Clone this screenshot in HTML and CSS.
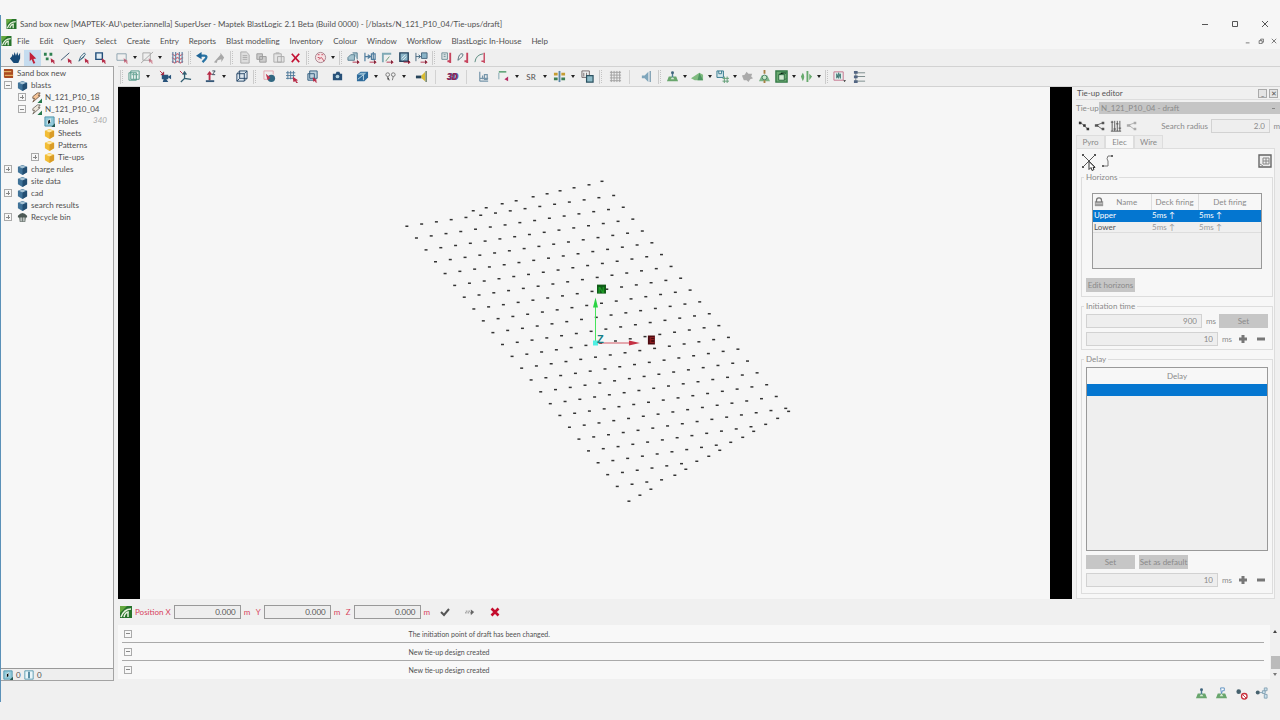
FILE: index.html
```html
<!DOCTYPE html>
<html lang="en">
<head>
<meta charset="utf-8">
<title>Sand box new - Maptek BlastLogic</title>
<link rel="stylesheet" href="styles.css">
</head>
<body>
<svg class="defs" aria-hidden="true">
<symbol id="logo" viewBox="0 0 12 12"><path fill="#27732b" d="M0 0h12v12H0z"/><path fill="#65a83f" d="M0 0h7L0 7z"/><path fill="none" stroke="#e8f2df" stroke-width="1.5" d="M1 11Q4 3 11 3M4 11q1-5 5-5M8 6v5"/></symbol>
<symbol id="hand" viewBox="0 0 14 14"><path fill="#174a78" d="M3 6l1-3 1 2 1-4 1.500 4L9 1l1 4 2-3v6l-2 5H5L1 8z"/></symbol>
<symbol id="arrow" viewBox="0 0 14 14"><path fill="#c22138" d="M4 1l7 7-3 .5L10 13l-2 .7L6 9l-2 2z"/></symbol>
<symbol id="ptr" viewBox="0 0 7 7"><path fill="#b62c48" d="M0 0l6 4-2 .5L6 7H4L3 5 1 6z"/></symbol>
<symbol id="dots" viewBox="0 0 14 14"><path fill="#2e8050" d="M1 2h3v3H1zM7 2h3v3H7zM3 7h3v3H3z"/><use href="#ptr" x="8" y="7" width="6" height="7"/></symbol>
<symbol id="line" viewBox="0 0 14 14"><path stroke="#35506d" d="M1 10L10 2"/><use href="#ptr" x="8" y="7" width="6" height="7"/></symbol>
<symbol id="poly" viewBox="0 0 14 14"><path fill="none" stroke="#35637d" d="M2 11L4 6l4-4 1 2-5 5M2 11l6-5"/><use href="#ptr" x="8" y="7" width="6" height="7"/></symbol>
<symbol id="rect" viewBox="0 0 14 14"><path fill="#e1edf4" stroke="#214e7a" stroke-width="1.500" d="M2 2h7v7H2z"/><use href="#ptr" x="8" y="7" width="6" height="7"/></symbol>
<symbol id="marq" viewBox="0 0 14 14"><path fill="none" stroke="#8aa2ae" d="M1 3h10v7H1z"/><use href="#ptr" x="8" y="7" width="6" height="7" opacity=".6"/></symbol>
<symbol id="cut" viewBox="0 0 14 14"><path fill="none" stroke="#a7a7a7" d="M2 2h8v8H2zM0 13L13 1"/><use href="#ptr" x="8" y="7" width="6" height="7" opacity=".5"/></symbol>
<symbol id="mesh" viewBox="0 0 14 14"><path stroke="#d66e7c" fill="none" stroke-width="1.300" d="M1 3l3 2 3-2 3 2 3-2M1 7l3 2 3-2 3 2 3-2M1 11l3 2 3-2 3 2 3-2"/><path stroke="#6687a8" stroke-width="1.300" d="M2 1v12M5 1v12M9 1v12M12 1v12"/></symbol>
<symbol id="undo" viewBox="0 0 14 14"><path fill="none" stroke="#2873a3" stroke-width="2.400" d="M4 5h5q4 0 1 4l-3 3"/><path fill="#1f6597" d="M0 5l6-4v8z"/></symbol>
<symbol id="redo" viewBox="0 0 14 14"><path fill="#a8a8a8" d="M1 12l7-8V2l4 5-3 5V9l-4 1-1 3z"/></symbol>
<symbol id="file" viewBox="0 0 14 14"><path fill="#ddd" stroke="#aaa" d="M3 1h6l3 3v9H3zM5 5h5M5 7h5M5 9h5"/></symbol>
<symbol id="copy" viewBox="0 0 14 14"><path fill="#ccc" stroke="#999" d="M2 3h6v6H2zM5 6h7v6H5z"/></symbol>
<symbol id="paste" viewBox="0 0 14 14"><path fill="#e5e5e5" stroke="#aaa" d="M2 3h8v9H2zM6 6h7v6H6zM4 2h4"/></symbol>
<symbol id="x" viewBox="0 0 14 14"><path stroke="#c31234" stroke-width="1.800" d="M3 3l8 9M11 3l-8 9"/></symbol>
<symbol id="clock" viewBox="0 0 14 14"><circle cx="7" cy="7" r="5.500" fill="#f6e2e4" stroke="#a6828d"/><path stroke="#c6485d" fill="none" d="M4 4h2M8 4h2M5 9l3-2 3 4M4 7h2"/></symbol>
<symbol id="v1" viewBox="0 0 14 14"><path fill="#a5c4cf" stroke="#577d91" d="M1 7l3-3h4v6H1zM6 2h5v7"/><path stroke="#b2304c" d="M6 12h7M11 10l2 2-2 2"/></symbol>
<symbol id="v2" viewBox="0 0 14 14"><path fill="none" stroke="#507d9e" stroke-width="1.300" d="M1 2v9M1 6h5M4 4l3 2-3 2M8 3h4v6H8zM10 1v9"/><path stroke="#b2304c" d="M6 12h7M11 10l2 2-2 2"/></symbol>
<symbol id="v3" viewBox="0 0 14 14"><path stroke="#7fa9b5" fill="none" stroke-width="2" d="M2 12V3h9"/><path stroke="#6c9a77" d="M5 11l4-5"/><path stroke="#b2304c" d="M6 12h7M11 10l2 2-2 2"/></symbol>
<symbol id="v4" viewBox="0 0 14 14"><path fill="#8ab4c7" stroke="#24435e" stroke-width="1.500" d="M2 2h9v9H2z"/><path stroke="#e5f0f4" d="M4 8l4-4M5 10l4-4"/><path stroke="#b2304c" d="M6 12h7M11 10l2 2-2 2"/></symbol>
<symbol id="v5" viewBox="0 0 14 14"><path fill="#8ab4c7" stroke="#45677e" d="M7 2h6v6H7zM1 2v9M1 6h5M4 4l2 2-2 2"/><path stroke="#b2304c" d="M6 12h7M11 10l2 2-2 2"/></symbol>
<symbol id="b1" viewBox="0 0 14 14"><path fill="#d8e2e4" stroke="#718f97" d="M2 2h6v7H2zM4 4h2M4 6h2"/><path stroke="#c7445e" stroke-width="2" d="M11 2v11M8 11h3"/></symbol>
<symbol id="b2" viewBox="0 0 14 14"><path fill="none" stroke="#53707a" d="M1 10q1-8 5-7 2 2-5 7"/><path stroke="#c7445e" stroke-width="2" d="M11 2v11M8 11h3"/></symbol>
<symbol id="b3" viewBox="0 0 14 14"><path fill="none" stroke="#53867a" d="M1 12q1-8 9-9"/><path stroke="#c7445e" stroke-width="1.500" d="M11 2v11M8 11h3"/></symbol>
<symbol id="layers" viewBox="0 0 14 14"><path fill="#e8f2ee" stroke="#4f9485" d="M1 3h8v8H1zM3 1h9v9H3z"/><path stroke="#6da698" d="M4 5h7M6 3v7M9 3v7"/></symbol>
<symbol id="cam" viewBox="0 0 14 14"><path fill="#28537b" d="M3 5h7v5H3zM10 7l3-2v5l-3-2zM5 10h3l2 3H4z"/><path stroke="#b62c48" d="M1 1l4 4M5 2v3H2"/></symbol>
<symbol id="axes" viewBox="0 0 14 14"><path fill="none" stroke="#315d70" stroke-width="1.400" d="M6 3v6l7 1M6 9l-4 4M4 5l2-3 2 3"/><path stroke="#b62c48" d="M1 1l3 3"/></symbol>
<symbol id="zed" viewBox="0 0 14 14"><path stroke="#b62c48" stroke-width="2" d="M6 4v7"/><path fill="#375878" d="M2 11h9v2H2z"/><path fill="#b62c48" d="M3 5l3-4 3 4z"/><path fill="none" stroke="#345" d="M9 1h3L9 5h3"/></symbol>
<symbol id="cube" viewBox="0 0 14 14"><path fill="#dce6ee" stroke="#274768" d="M2 4h8v8H2zM5 1h8v8H5zM2 4l3-3M10 4l3-3M2 12l3-3M10 12l3-3"/></symbol>
<symbol id="orbit" viewBox="0 0 14 14"><circle cx="9" cy="9" r="4" fill="#326882"/><path fill="none" stroke="#e2a5ae" d="M1 1h10v4M1 1v9h4"/><path fill="#c23450" d="M3 4l5 4-3 3z"/></symbol>
<symbol id="snap" viewBox="0 0 14 14"><path stroke="#4d7898" d="M2 1v9M5 1v9M8 1v9M0 3h10M0 6h10M0 9h8"/><use href="#ptr" x="7" y="7" width="7" height="7"/></symbol>
<symbol id="win" viewBox="0 0 14 14"><path fill="#bdd1dd" stroke="#315c7d" d="M4 1h8v8H4zM2 4h7v7H2z"/><use href="#ptr" x="7" y="7" width="6" height="7"/></symbol>
<symbol id="photo" viewBox="0 0 14 14"><path fill="#275078" d="M2 4h3l1-2h3l1 2h2v7H2z"/><circle cx="7" cy="7" r="2" fill="#b4d2df"/></symbol>
<symbol id="solid" viewBox="0 0 14 14"><path fill="#2e6b9b" d="M1 5l4-3h8v6l-4 4H1z"/><path fill="#93bdd4" d="M2 5l3-2h6L9 5z"/><path stroke="#c4dce6" fill="none" d="M2 10l6-5v6"/></symbol>
<symbol id="pins" viewBox="0 0 14 14"><circle cx="4" cy="5" r="2" fill="#eee" stroke="#777"/><circle cx="10" cy="5" r="2" fill="#eee" stroke="#777"/><path stroke="#777" d="M4 7v3l2 1M10 7l-1 4"/></symbol>
<symbol id="torch" viewBox="0 0 14 14"><path fill="#26445a" d="M1 6h6v3H1z"/><path fill="#d8bb31" d="M7 6l4-4v10L7 9z"/><path stroke="#687a60" stroke-width="1.500" d="M12 1v12"/></symbol>
<symbol id="ruler" viewBox="0 0 14 14"><path fill="none" stroke="#7695aa" stroke-width="1.300" d="M3 2v10M3 9h9M6 6v4M8 5h3v5H8zM3 12h9"/></symbol>
<symbol id="graph" viewBox="0 0 14 14"><path fill="none" stroke="#4b9866" stroke-width="1.500" d="M2 2h8"/><path stroke="#7ba2ae" d="M2 3v7"/><path fill="#b52d65" d="M8 10l4-3v5z"/></symbol>
<symbol id="bars" viewBox="0 0 14 14"><path stroke="#5b87a8" stroke-width="2" d="M7 1v12"/><path fill="#c69d33" d="M1 3h4v3H1zM9 3h4v3H9z"/><path fill="#3e7f55" d="M1 8h4v3H1zM9 8h4v3H9z"/></symbol>
<symbol id="swap" viewBox="0 0 14 14"><path fill="#eee" stroke="#73686a" d="M1 1h8v7H1zM3 3v4M6 3v4"/><path fill="#8fbcc9" stroke="#2b5261" stroke-width="1.300" d="M6 6h7v7H6z"/></symbol>
<symbol id="grid" viewBox="0 0 14 14"><path stroke="#a1a1a1" d="M2.500 1v12M5.500 1v12M8.500 1v12M11.500 1v12M1 2.500h12M1 5.500h12M1 8.500h12M1 11.500h12"/></symbol>
<symbol id="mute" viewBox="0 0 14 14"><path fill="#7fa6bc" d="M2 6h3l4-4v11L5 9H2z"/><path stroke="#7095ab" stroke-width="1.300" d="M11 1v12"/></symbol>
<symbol id="hill" viewBox="0 0 14 14"><path fill="#69a66d" d="M1 12l2-5h8l2 5z"/><path fill="#d6ead4" d="M5 10l2-3 2 3z"/><path stroke="#4f7f96" stroke-width="1.500" d="M7 3v5"/><circle cx="7" cy="3" r="1.600" fill="#3f647c"/></symbol>
<symbol id="slope" viewBox="0 0 14 14"><path fill="#80bb80" d="M0 9l9-6 4 2v6H4z"/><path fill="#4e9762" d="M9 3l4 8H7z"/></symbol>
<symbol id="savegrid" viewBox="0 0 14 14"><path fill="#d3e7eb" stroke="#33788e" d="M1 1h7v7H1zM3 1v3h3V1"/><path stroke="#5f9c72" d="M7 9h7M7 12h7M9 7v7M12 7v7"/></symbol>
<symbol id="blob" viewBox="0 0 14 14"><path fill="#aaa" d="M1 6l3-1 2-3 2 2 4 0-1 3 2 2-3 1-2 3-2-2-3 0z"/></symbol>
<symbol id="peak" viewBox="0 0 14 14"><path fill="#7bb486" d="M1 12l3-6h6l3 6z"/><circle cx="7" cy="8" r="2.500" fill="#c9e8cb" stroke="#478165"/><path fill="#a98144" d="M6 0h2v4H6zM6 11h2v3H6z"/></symbol>
<symbol id="box" viewBox="0 0 14 14"><path fill="#6aaa70" stroke="#367b48" stroke-width="1.500" d="M1 1h12v12H1z"/><path fill="#d2ead2" stroke="#2c6b43" d="M4 5h6v6H4z"/><path stroke="#2c6b43" d="M4 5l3-2h5M10 5l2-2M10 11l2-2"/></symbol>
<symbol id="fan" viewBox="0 0 14 14"><path fill="#67aa6d" d="M3 3q3 4 0 9l-2-5zM7 1h2v12H7zM10 4l3 3-3 4z"/></symbol>
<symbol id="filter" viewBox="0 0 14 14"><path fill="#e4f0ee" stroke="#c8728c" d="M1 2h10v9H1z"/><path stroke="#4b8682" d="M4 9V4l2 5V3l2 6V4"/><path fill="#222" d="M11 11h3l-1.500 2z"/></symbol>
<symbol id="tree" viewBox="0 0 14 14"><path stroke="#788" fill="none" d="M4 3h9M4 7h9M4 12h9M3 1v12"/><path fill="#536683" d="M1 1h4v3H1zM1 6h4v3H1zM1 11h4v3H1z"/></symbol>
<symbol id="db" viewBox="0 0 12 12"><path fill="#ab4b22" d="M1 1h9l1 1v9H2L1 10z"/><path stroke="#f2ce78" d="M1 4h8M2 8h9"/></symbol>
<symbol id="bluecube" viewBox="0 0 12 12"><path fill="#3f7298" d="M1 3l5-2 5 2v6l-5 3-5-3z"/><path fill="#a8c4d5" d="M2 3l4-1.500L10 3 6 5z"/><path fill="#234e72" d="M6 5l5-2v6l-5 3z"/></symbol>
<symbol id="goldcube" viewBox="0 0 12 12"><path fill="#f2bd35" d="M1 3l5-2 5 2v6l-5 3-5-3z"/><path fill="#ffe8a5" d="M2 3l4-1.500L10 3 6 5z"/><path fill="#d99c28" d="M6 5l5-2v6l-5 3z"/></symbol>
<symbol id="blast" viewBox="0 0 12 12"><path fill="#f5c397" stroke="#755f4c" d="M2 5l5-4h3L8 4h2l-8 7 2-4H2z"/><path fill="#26774b" d="M12 7v5H7z"/></symbol>
<symbol id="blast2" viewBox="0 0 12 12"><path fill="#eee6d9" stroke="#776e66" d="M2 5l5-4h3L8 4h2l-8 7 2-4H2z"/><path fill="#26774b" d="M12 7v5H7z"/></symbol>
<symbol id="holes" viewBox="0 0 12 12"><path fill="#92cada" stroke="#4b91a9" d="M1 1h10v10H1z"/><path stroke="#e9fafd" d="M4 9V5l3-2v4"/><path fill="#245a54" d="M12 8v4H8z"/></symbol>
<symbol id="bin" viewBox="0 0 12 12"><path fill="#78817d" d="M2 5h8l-1 6H3z"/><path fill="#4c5955" d="M1 4q5-6 10 0v2H1z"/><path fill="#e6edea" d="M4 6h1v4H4zM7 6h1v4H7z"/></symbol>
<symbol id="chain" viewBox="0 0 14 14"><path stroke="#555" d="M2 2l10 9"/><path fill="#333" d="M1 2h3v3H1zM6 5h3v3H6zM10 9h3v3h-3z"/></symbol>
<symbol id="share" viewBox="0 0 14 14"><path stroke="currentColor" fill="none" d="M3 6l8-3M3 6l7 5"/><path fill="currentColor" d="M1 5h4v3H1zM9 2h3v3H9zM9 9h3v3H9z"/></symbol>
<symbol id="sliders" viewBox="0 0 14 14"><path stroke="#4a4a4a" d="M2.500 1v12M5.500 1v12M8.500 1v12M11.500 1v12M1 2.500h3M4 10.500h3M7 4.500h3M10 9.500h3M1 13h12"/></symbol>
<symbol id="cross" viewBox="0 0 14 14"><path stroke="#555" d="M1 1l12 12M13 1L1 13"/><path fill="#555" d="M0 0h2v2H0zM12 0h2v2h-2zM0 12h2v2H0z"/></symbol>
<symbol id="zig" viewBox="0 0 14 14"><path fill="none" stroke="#777" d="M11 2H7q-2 3 0 5v5H2"/><path fill="#666" d="M10 1h2v2h-2zM1 11h2v2H1z"/></symbol>
<symbol id="table" viewBox="0 0 14 14"><path fill="#eee" stroke="#666" stroke-width="1.400" d="M1 1h12v12H1z"/><path stroke="#888" fill="none" d="M5 4h6v6H5zM5 7h6M8 4v6M2 10l3 2"/></symbol>
<symbol id="lock" viewBox="0 0 12 12"><path fill="#999" d="M1 5h10v6H1z"/><path fill="none" stroke="#777" stroke-width="1.500" d="M3 6V4q0-3 3-3t3 3v2"/><path stroke="#ccc" d="M2 8h8"/></symbol>
<symbol id="plus" viewBox="0 0 10 10"><path fill="#777" d="M3.500 1h3v2.500H9v3H6.500V9h-3V6.500H1v-3h2.500z"/></symbol>
<symbol id="minus" viewBox="0 0 10 10"><path fill="#777" d="M1 3.500h8v3H1z"/></symbol>
<symbol id="tick" viewBox="0 0 10 10"><path fill="none" stroke="#555" stroke-width="2" d="M1 5l3 3 5-6"/></symbol>
<symbol id="skip" viewBox="0 0 12 10"><path stroke="#777" stroke-dasharray="2 1" d="M0 6h8M1 4h6"/><path fill="#666" d="M7 2l4 3-4 4z"/></symbol>
<symbol id="no" viewBox="0 0 10 10"><path stroke="#c40c2d" stroke-width="2.600" d="M1.500 1.500l7 7M8.500 1.500l-7 7"/></symbol>
<symbol id="stop" viewBox="0 0 14 14"><circle cx="4" cy="5" r="2.500" fill="#46616d"/><circle cx="10" cy="10" r="3" fill="#fff" stroke="#c8303c" stroke-width="1.400"/><path stroke="#c8303c" d="M8 8l4 4"/></symbol>
<symbol id="net" viewBox="0 0 14 14"><circle cx="3" cy="6" r="2.200" fill="#46616d"/><path stroke="#86a3b4" fill="#c9dfeb" d="M8 4h3v3H8zM10 1h3v3h-3zM10 8h3v4h-3zM5 6h3"/></symbol>
<symbol id="hill2" viewBox="0 0 14 14"><path fill="#69a66d" d="M1 12l2-5h8l2 5z"/><path fill="#d6ead4" d="M5 10l2-3 2 3z"/><path fill="#fff" stroke="#5a8fc0" d="M6 1h4v3H8L7 7z"/></symbol>
<symbol id="hole1" viewBox="0 0 12 12"><path fill="#e9f6fa" stroke="#4b91a9" d="M1 1h10v10H1z"/><path stroke="#3a7a94" stroke-width="2" d="M6 2v8"/></symbol>
</svg>

<div class="window">
<header class="title">
  <svg class="logo"><use href="#logo"/></svg>
  <h1>Sand box new [MAPTEK-AU\peter.iannella] SuperUser - Maptek BlastLogic 2.1 Beta (Build 0000) - [/blasts/N_121_P10_04/Tie-ups/draft]</h1>
  <div class="winbtns">
    <button aria-label="Minimise"><svg viewBox="0 0 8 8"><path d="M1 4.500h6"/></svg></button>
    <button aria-label="Maximise"><svg viewBox="0 0 8 8"><path d="M1.500 1.500h5v5h-5z"/></svg></button>
    <button aria-label="Close"><svg viewBox="0 0 8 8"><path d="M1 1l6 6M7 1L1 7"/></svg></button>
  </div>
</header>
<nav class="menu">
  <svg class="logo"><use href="#logo"/></svg>
  <button>File</button><button>Edit</button><button>Query</button><button>Select</button><button>Create</button><button>Entry</button><button>Reports</button><button>Blast modelling</button><button>Inventory</button><button>Colour</button><button>Window</button><button>Workflow</button><button>BlastLogic In-House</button><button>Help</button>
  <div class="winbtns small">
    <button aria-label="Minimise view"><svg viewBox="0 0 8 8"><path d="M1 6.500h5"/></svg></button>
    <button aria-label="Restore view"><svg viewBox="0 0 8 8"><path d="M1.500 3.500h4v4h-4zM3.500 3v-1.500h4v4h-2"/></svg></button>
    <button aria-label="Close view"><svg viewBox="0 0 8 8"><path d="M1 1l6 6M7 1L1 7"/></svg></button>
  </div>
</nav>
<div class="bar main-tools" role="toolbar" aria-label="Edit tools">
  <button><svg><use href="#hand"/></svg></button><button class="on"><svg><use href="#arrow"/></svg></button><button><svg><use href="#dots"/></svg></button><button><svg><use href="#line"/></svg></button><button><svg><use href="#poly"/></svg></button><button><svg><use href="#rect"/></svg></button><i class="gap"></i>
  <button><svg><use href="#marq"/></svg></button><button class="more"></button><button><svg><use href="#cut"/></svg></button><button class="more"></button><i class="gap"></i><button><svg><use href="#mesh"/></svg></button><i class="sep"></i>
  <button><svg><use href="#undo"/></svg></button><button><svg><use href="#redo"/></svg></button><i class="sep"></i>
  <button><svg><use href="#file"/></svg></button><button><svg><use href="#copy"/></svg></button><button><svg><use href="#paste"/></svg></button><button><svg><use href="#x"/></svg></button><i class="sep"></i>
  <button><svg><use href="#clock"/></svg></button><button class="more"></button><i class="sep"></i>
  <button><svg><use href="#v1"/></svg></button><button><svg><use href="#v2"/></svg></button><button><svg><use href="#v3"/></svg></button><button><svg><use href="#v4"/></svg></button><button><svg><use href="#v5"/></svg></button><i class="sep"></i>
  <button><svg><use href="#b1"/></svg></button><button><svg><use href="#b2"/></svg></button><button><svg><use href="#b3"/></svg></button>
</div>
<div class="body">
  <aside class="explorer">
    <ul class="tree">
      <li class="root"><svg><use href="#db"/></svg>Sand box new</li>
      <li><button class="tog minus"></button><svg><use href="#bluecube"/></svg>blasts</li>
      <li class="l2"><button class="tog"></button><svg><use href="#blast"/></svg>N_121_P10_18</li>
      <li class="l2"><button class="tog minus"></button><svg><use href="#blast2"/></svg>N_121_P10_04</li>
      <li class="l3"><i></i><svg><use href="#holes"/></svg>Holes<em>340</em></li>
      <li class="l3"><i></i><svg><use href="#goldcube"/></svg>Sheets</li>
      <li class="l3"><i></i><svg><use href="#goldcube"/></svg>Patterns</li>
      <li class="l3"><button class="tog"></button><svg><use href="#goldcube"/></svg>Tie-ups</li>
      <li><button class="tog"></button><svg><use href="#bluecube"/></svg>charge rules</li>
      <li><i></i><svg><use href="#bluecube"/></svg>site data</li>
      <li><button class="tog"></button><svg><use href="#bluecube"/></svg>cad</li>
      <li><i></i><svg><use href="#bluecube"/></svg>search results</li>
      <li><button class="tog"></button><svg><use href="#bin"/></svg>Recycle bin</li>
    </ul>
    <div class="counts"><svg><use href="#holes"/></svg><span>0</span><svg><use href="#hole1"/></svg><span>0</span></div>
  </aside>
  <main class="work">
    <div class="bar view-tools" role="toolbar" aria-label="View tools">
      <div class="roomy"><i class="sep"></i>
      <button><svg><use href="#layers"/></svg></button><button class="more"></button><i class="gap s"></i><button><svg><use href="#cam"/></svg></button><button><svg><use href="#axes"/></svg></button><i class="gap"></i><button><svg><use href="#zed"/></svg></button><button class="more"></button><i class="gap s"></i><button><svg><use href="#cube"/></svg></button><i class="sep"></i>
      <button><svg><use href="#orbit"/></svg></button><i class="gap s"></i><button><svg><use href="#snap"/></svg></button><button><svg><use href="#win"/></svg></button><i class="sep n"></i><button><svg><use href="#photo"/></svg></button><i class="sep n"></i>
      <button><svg><use href="#solid"/></svg></button><button class="more"></button><button><svg><use href="#pins"/></svg></button><button class="more"></button><i class="gap s"></i><button><svg><use href="#torch"/></svg></button><i class="sep w"></i><button class="threed">3D</button><i class="sep w"></i>
      <button><svg><use href="#ruler"/></svg></button><button><svg><use href="#graph"/></svg></button><button class="more"></button><button class="sr">SR</button><button class="more"></button><button><svg><use href="#bars"/></svg></button><button class="more"></button><button><svg><use href="#swap"/></svg></button><i class="sep"></i><button><svg><use href="#grid"/></svg></button><i class="sep w"></i><button><svg><use href="#mute"/></svg></button></div>
      <i class="sep"></i>
      <button><svg><use href="#hill"/></svg></button><button class="more"></button><button><svg><use href="#slope"/></svg></button><button class="more"></button><button><svg><use href="#savegrid"/></svg></button><button class="more"></button><button><svg><use href="#blob"/></svg></button><button><svg><use href="#peak"/></svg></button><button><svg><use href="#box"/></svg></button><button class="more"></button><button><svg><use href="#fan"/></svg></button><button class="more"></button><i class="sep"></i><button><svg><use href="#filter"/></svg></button><i class="gap s"></i><button><svg><use href="#tree"/></svg></button>
    </div>
    <div class="mid">
      <section class="view" aria-label="Blast plan">
        <svg class="plan" viewBox="140 87 910 513">
          <g id="holesLayer"></g>
          <path stroke="#43e45a" d="M595.500 343V305"/><path fill="#2bd444" d="M593 308l2.500-10 2.500 10z"/>
          <path stroke="#d55a66" d="M597 343.500h34"/><path fill="#c43143" d="M629 341l11 2.500-11 2.500z"/>
          <path fill="#4ff0e4" d="M593 341h5v5h-5z"/>
          <path fill="#105d18" d="M597 285h9v9h-9z"/><path fill="#4d0b0f" d="M648 336h7v9h-7z"/>
          <text x="598" y="293" fill="#1fa028">N</text><text x="649" y="344" fill="#8c1c20">E</text>
          <text x="597" y="344" class="z">Z</text>
        </svg>
      </section>
      <aside class="editor">
        <header><h2>Tie-up editor</h2><button class="pb" aria-label="Collapse">_</button><button class="pb" aria-label="Close">✕</button></header>
        <div class="combo"><label for="tie">Tie-up</label><select id="tie"><option>N_121_P10_04 - draft</option></select></div>
        <div class="search"><button><svg><use href="#chain"/></svg></button><button><svg><use href="#share"/></svg></button><button><svg><use href="#sliders"/></svg></button><button class="dim"><svg><use href="#share"/></svg></button>
          <label for="rad">Search radius</label><input id="rad" value="2.0"><span>m</span></div>
        <div class="tabs" role="tablist"><button role="tab">Pyro</button><button role="tab" aria-selected="true">Elec</button><button role="tab">Wire</button></div>
        <div class="panel">
          <div class="ptools"><button><svg><use href="#cross"/></svg><svg class="cursor" viewBox="0 0 8 11"><path fill="#fff" stroke="#333" d="M1 1v8l2-2 1 3 2-1-1-2h2z"/></svg></button><button><svg><use href="#zig"/></svg></button><button class="end"><svg><use href="#table"/></svg></button></div>
          <fieldset class="horizons"><legend>Horizons</legend>
            <div class="tbox"><table><thead><tr><th class="name"><svg><use href="#lock"/></svg>Name</th><th class="deck">Deck firing</th><th>Det firing</th></tr></thead>
            <tbody><tr class="sel"><td>Upper</td><td>5ms ↑</td><td>5ms ↑</td></tr><tr><td>Lower</td><td class="off">5ms ↑</td><td class="off">5ms ↑</td></tr></tbody></table></div>
            <button class="btn">Edit horizons</button>
          </fieldset>
          <fieldset><legend>Initiation time</legend>
            <div class="line"><input aria-label="Initiation time" value="900"><span>ms</span><button class="btn">Set</button></div>
            <div class="line"><input aria-label="Initiation step" value="10"><span class="u">ms</span><button class="pm" aria-label="Increase"><svg><use href="#plus"/></svg></button><button class="pm" aria-label="Decrease"><svg><use href="#minus"/></svg></button></div>
          </fieldset>
          <fieldset class="delay"><legend>Delay</legend>
            <div class="tbox"><table><thead><tr><th>Delay</th></tr></thead><tbody><tr class="sel"><td></td></tr></tbody></table></div>
            <div class="line"><button class="btn">Set</button><button class="btn">Set as default</button></div>
            <div class="line"><input aria-label="Delay step" value="10"><span class="u">ms</span><button class="pm" aria-label="Increase"><svg><use href="#plus"/></svg></button><button class="pm" aria-label="Decrease"><svg><use href="#minus"/></svg></button></div>
          </fieldset>
        </div>
      </aside>
    </div>
    <form class="position"><svg class="logo"><use href="#logo"/></svg><label for="px">Position X</label><input id="px" value="0.000"><span>m</span><label for="py">Y</label><input id="py" value="0.000"><span>m</span><label for="pz">Z</label><input id="pz" value="0.000"><span>m</span>
      <button type="button" aria-label="Accept"><svg><use href="#tick"/></svg></button><button type="button" aria-label="Next"><svg><use href="#skip"/></svg></button><button type="button" aria-label="Cancel"><svg><use href="#no"/></svg></button></form>
    <div class="log"><ul><li><button class="tog minus"></button><span>The initiation point of draft has been changed.</span></li><li><button class="tog minus"></button><span>New tie-up design created</span></li><li><button class="tog minus"></button><span>New tie-up design created</span></li></ul><div class="scroll"><b></b><i></i><b class="dn"></b></div></div>
  </main>
</div>
<footer class="status"><svg><use href="#hill"/></svg><svg><use href="#hill2"/></svg><svg><use href="#stop"/></svg><svg><use href="#net"/></svg></footer>
</div>
<script src="plan.js"></script>
</body>
</html>
```
FILE: styles.css
```css
* { box-sizing: border-box; }
html, body { height: 100%; }
body { margin: 0; padding: 15px 0 18px; background: #f0f0f0; background-image: linear-gradient(#f6f6f6 49px, transparent 49px); color: #505050; font: 8px/12px Lato, "Noto Sans", sans-serif; }
button, input, select { font: inherit; color: inherit; margin: 0; padding: 0; border: 0; background: none; border-radius: 0; }
ul { list-style: none; margin: 0; padding: 0; }
h1, h2 { margin: 0; font: inherit; }
svg { display: block; flex: none; }
.defs { position: absolute; width: 0; height: 0; }
.logo { width: 11px; height: 10px; }
.window { height: 100%; display: flex; flex-direction: column; border-left: 1px solid #5b91b8; }
.title { display: flex; align-items: center; height: 18px; padding-left: 5px; gap: 3px; }
.title h1 { flex: 1; font-size: 8px; white-space: nowrap; }
.winbtns { display: flex; margin-left: auto; }
.winbtns button { width: 30px; display: grid; place-items: center; }
.winbtns svg { width: 8px; height: 8px; fill: none; stroke: #555; }
.winbtns.small button { width: 13px; }
.winbtns.small svg { width: 6px; height: 6px; }
.menu { display: flex; align-items: center; height: 16px; }
.menu > button { padding: 0 5px; white-space: nowrap; }

.bar { display: flex; align-items: center; background: #efefef; }
.bar button { width: 17px; height: 16px; flex: none; display: grid; place-items: center; }
.bar svg { width: 13px; height: 13px; }
.bar .on { background: #c5dcef; }
.bar .more { width: 8px; }
.bar .more::after { content: ""; border: 2px solid transparent; border-top: 3px solid #222; border-bottom: 0; }
.gap { width: 5px; flex: none; }
.gap.s { width: 3px; }
.sep { width: 8px; height: 14px; flex: none; background: linear-gradient(#ccc, #ccc) 2px 0 / 1px 100% no-repeat, repeating-linear-gradient(#c4c4c4 0 1px, transparent 1px 2px) 4px 0 / 1px 100% no-repeat; }
.sep.n { width: 5px; background: none; }
.sep.w { width: 11px; background: linear-gradient(#d2d2d2, #d2d2d2) 4px 0 / 1px 100% no-repeat; }
.main-tools { height: 17px; padding-left: 6px; }
.view-tools { height: 21px; border: 1px solid #d2d2d2; border-width: 1px 0; }
.roomy { display: flex; align-items: center; }
.roomy button { width: 20px; }
.roomy > .sep:first-child { width: 6px; }
.bar .threed { color: #8b2356; font: italic 900 9px Roboto, sans-serif; text-shadow: 1px 0 #4661a2; }

.body { flex: 1; min-height: 0; display: flex; gap: 4px; }
.explorer { width: 113px; flex: none; display: flex; flex-direction: column; margin-bottom: 3px; border: 1px solid #a3a3a3; border-left: 0; background: #f7f7f7; }
.tree { flex: 1; }
.tree li { display: flex; align-items: center; height: 12px; padding-left: 3px; white-space: nowrap; }
.tree li > svg { width: 11px; height: 11px; margin: 0 3px 0 5px; }
.tree .root { padding-left: 2px; }
.tree .root > svg { margin-left: 0; }
.tree .l2 { padding-left: 17px; }
.tree .l3 { padding-left: 30px; }
.tree li > i { width: 8px; }
.tree em { margin: 0 6px 2px auto; color: #aaa; }
.tog { width: 8px; height: 8px; flex: none; }
.tree .tog, .log .tog { border: 1px solid #aaa; background: linear-gradient(#888, #888) 1px 50% / 4px 1px no-repeat; }
.tree .tog:not(.minus) { background: linear-gradient(#888, #888) 1px 50% / 4px 1px no-repeat, linear-gradient(#888, #888) 50% 1px / 1px 4px no-repeat; }
.counts { display: flex; align-items: center; gap: 3px; height: 12px; padding-left: 2px; border-top: 1px solid #999; background: #eee; }
.counts svg { width: 10px; height: 10px; }
.counts span { width: 5px; }

.work { flex: 1; min-width: 0; display: flex; flex-direction: column; }
.mid { flex: 1; min-height: 0; display: flex; }
.view { flex: 1; min-width: 0; border: solid #000; border-width: 0 22px; background: #f6f6f6; }
.plan { width: 100%; height: 100%; }
.plan text { font: bold 9px "Liberation Sans", sans-serif; }
.plan .z { fill: #177f86; font-size: 11px; }
#holesLayer { stroke: #333; stroke-width: 1.5px; }

.editor { width: 208px; flex: none; display: flex; flex-direction: column; padding-left: 4px; color: #8a8a8a; }
.editor header { display: flex; align-items: center; height: 13px; gap: 2px; padding: 0 2px 0 1px; border-bottom: 1px solid #ddd; color: #555; }
.editor h2 { flex: 1; }
.pb { width: 9px; height: 9px; border: 1px solid #aaa; background: #e4e4e4; font-size: 7px; line-height: 7px; }
.combo { display: flex; align-items: center; height: 16px; }
.combo label { width: 23px; }
.combo select { flex: 1; height: 12px; appearance: none; padding-left: 2px; opacity: 1; background: linear-gradient(#888, #888) right 5px center / 3px 1px no-repeat, #c5c5c5; }
.search { display: flex; align-items: center; height: 19px; }
.search button { width: 16px; display: grid; place-items: center; color: #555; }
.search .dim { color: #aaa; }
.search svg { width: 12px; height: 12px; }
.search label { margin: 0 3px 0 auto; }
input { min-width: 0; height: 14px; padding: 0 4px; border: 1px solid #d2d2d2; background: #eee; text-align: right; }
.search input { width: 59px; }
.search span { width: 10px; text-align: right; }
.tabs { display: flex; height: 13px; }
.tabs button { width: 29px; background: #ececec; border: 1px solid #ddd; border-bottom: 0; line-height: 11px; }
.tabs [aria-selected] { background: #f7f7f7; }
.panel { flex: 1; display: flex; flex-direction: column; gap: 3px; margin-right: 5px; padding: 5px 0 4px 4px; border: 1px solid #ddd; background: #f7f7f7; }
.ptools { display: flex; height: 14px; padding: 0 2px 0 1px; }
.ptools button { position: relative; width: 19px; }
.ptools svg { width: 14px; height: 14px; }
.ptools .end { width: 14px; margin-left: auto; }
.ptools .cursor { position: absolute; left: 6px; top: 6px; width: 8px; height: 12px; }
fieldset { min-width: 0; margin: 0 1px 0 0; padding: 2px 4px 3px; border: 1px solid #ddd; display: flex; flex-direction: column; gap: 4px; }
legend { padding: 0 2px; height: 12px; margin-left: -2px; line-height: 12px; }
.horizons { height: 126px; }
.horizons .tbox { margin: 8px 6px 5px; height: 76px; }
.horizons .btn { align-self: flex-start; }
.tbox { border: 1px solid #999; background: #efefef; }
.delay { flex: 1; padding-bottom: 6px; }
.delay .tbox { flex: 1; }
table { width: 100%; border-collapse: collapse; table-layout: fixed; }
th { height: 16px; padding: 0; font-weight: normal; background: #f7f7f7; border-right: 1px solid #ddd; }
th:last-child { border-right: 0; }
th.name { width: 58px; padding-left: 10px; position: relative; }
th.deck { width: 47px; }
.name svg { position: absolute; left: 1px; top: 3px; width: 10px; height: 10px; }
td { height: 11px; padding: 0 1px; line-height: 10px; color: #555; border-bottom: 1px solid #ddd; }
td.off { color: #999; }
.sel td { background: #0476d0; color: #fff; border-color: #0476d0; }
.btn { width: 49px; height: 14px; background: #c6c6c6; white-space: nowrap; }
.line { display: flex; align-items: center; gap: 4px; }
.line input { flex: 1; }
.line span { width: 9px; text-align: center; }
.line .u { width: 10px; }
.pm { width: 14px; display: grid; place-items: center; }
.pm svg { width: 10px; height: 10px; }

.position { display: flex; align-items: center; height: 26px; gap: 3px; padding-left: 2px; color: #d8435c; }
.position .logo { width: 12px; height: 12px; }
.position input { width: 67px; border-color: #999; color: #555; }
.position span { width: 9px; }
.position button { width: 15px; margin-left: 7px; }
.position span + button { margin-left: 4px; }
.position svg { width: 10px; height: 10px; }
.log { display: flex; height: 54px; margin-bottom: 5px; font-size: 7px; }
.log ul { flex: 1; background: #f8f8f8; padding: 0 6px 0 4px; display: flex; flex-direction: column; }
.log li { flex: 1; display: flex; align-items: center; padding-left: 2px; border-bottom: 1px solid #aaa; }
.log li:last-child { border-color: transparent; }
.log li span { margin-left: 24%; padding-left: 3px; }
.scroll { width: 10px; display: flex; flex-direction: column; align-items: center; padding: 5px 0 3px; }
.scroll b { border: 2px solid transparent; border-bottom: 3px solid #444; border-top: 0; }
.scroll i { width: 9px; height: 13px; margin-top: auto; background: #bbb; }
.scroll .dn { margin-top: 4px; border: 2px solid transparent; border-top: 3px solid #777; border-bottom: 0; }
.status { display: flex; justify-content: flex-end; align-items: center; height: 18px; gap: 7px; padding-right: 12px; }
.status svg { width: 13px; height: 13px; }
```
FILE: plan.js
```js
// Blast holes: a skewed grid of rows, plus the two trimmed boundary rows.
const upper = [[473,211],[486,208],[502,204],[516,201],[533,197],[547,194],[560,191],[574,188],[589,185],[602,181.5]];
const lower = [[629,502],[640,496],[651,490],[675,476],[686,470],[697,462],[709,457],[720,451],[731,443],[743,438],[754,432],[766,425],[778,419],[789,412]];
const points = [...upper, ...lower];
const edge = x => 502 - (x - 629.6) * 0.565;
for (let row = 0; row < 23; row++) {
  for (let col = 0; col < 15; col++) {
    const x = 406.5 + row * 9.58 + col * 14.8;
    const y = 226.5 + row * 11.85 - col * 2.2;
    const crowded = lower.some(([px, py]) => Math.hypot(px - x, py - y) < 4);
    if (y < edge(x) - 3 && !crowded) points.push([x, y]);
  }
}
document.getElementById("holesLayer").innerHTML = points
  .map(([x, y]) => `<path d="M${(x - 1.5).toFixed(1)} ${y.toFixed(1)}h3"/>`).join("");
```
